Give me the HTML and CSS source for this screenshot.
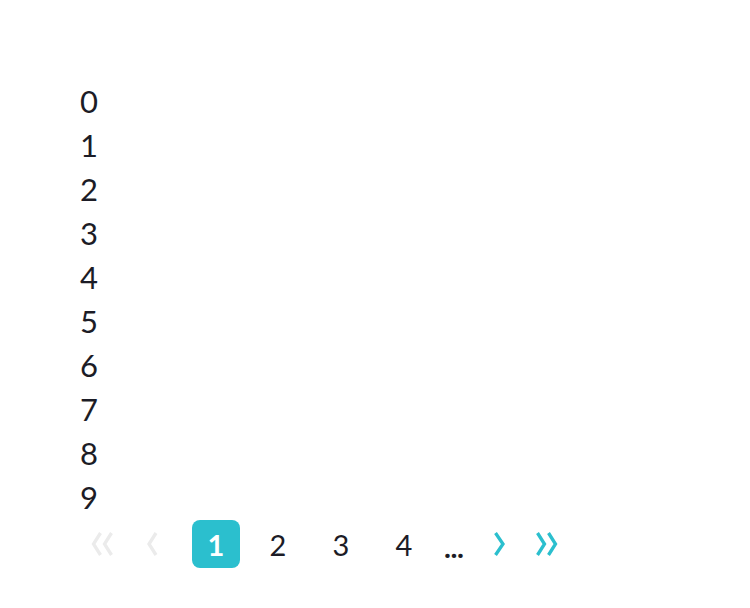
FILE: index.html
```html
<!DOCTYPE html>
<html lang="en">
<head>
<meta charset="utf-8">
<title>Pagination</title>
<link rel="stylesheet" href="styles.css">
</head>
<body>
<div class="page">
  <ul class="items">
    <li>0</li><li>1</li><li>2</li><li>3</li><li>4</li>
    <li>5</li><li>6</li><li>7</li><li>8</li><li>9</li>
  </ul>
  <nav class="pager">
    <span class="pg pg-first is-disabled">
      <svg viewBox="0 0 24 24" width="24" height="24"><polyline points="10.5,1 3.5,12 10.5,23"/><polyline points="21.5,1 14.5,12 21.5,23"/></svg>
    </span>
    <span class="pg pg-prev is-disabled">
      <svg viewBox="0 0 24 24" width="24" height="24"><polyline points="16,1 9,12 16,23"/></svg>
    </span>
    <span class="pg pg-num is-current">1</span>
    <span class="pg pg-num pg-two">2</span>
    <span class="pg pg-num">3</span>
    <span class="pg pg-num">4</span>
    <span class="pg pg-dots">...</span>
    <span class="pg pg-next">
      <svg viewBox="0 0 24 24" width="24" height="24"><polyline points="7.5,1 15,12 7.5,23"/></svg>
    </span>
    <span class="pg pg-last">
      <svg viewBox="0 0 24 24" width="24" height="24"><polyline points="2.5,1 9.5,12 2.5,23"/><polyline points="13.5,1 20.5,12 13.5,23"/></svg>
    </span>
  </nav>
</div>
</body>
</html>
```

FILE: styles.css
```css
html, body {
  margin: 0;
  padding: 0;
  background: #ffffff;
}

body {
  font-family: Lato, "Open Sans", "Liberation Sans", sans-serif;
  color: #1c1c26;
}

.page {
  padding: 79px 0 0 80px;
}

.items {
  list-style: none;
  margin: 0;
  padding: 0;
  font-size: 31px;
  line-height: 44px;
}

.pager {
  display: flex;
  align-items: center;
  height: 48px;
  margin-top: 1px;
  font-size: 29px;
}

.pg {
  display: flex;
  align-items: center;
  justify-content: center;
  height: 48px;
}

.pg svg {
  display: block;
  fill: none;
  stroke: #2bbfce;
  stroke-width: 3.3;
  stroke-linecap: butt;
  stroke-linejoin: miter;
}

.pg.is-disabled svg {
  stroke: #ebebeb;
}

.pg-first {
  width: 24px;
  margin-left: 10px;
}

.pg-prev {
  width: 24px;
  margin-left: 26px;
}

.pg-num {
  width: 48px;
  margin-left: 15px;
}

.is-current {
  margin-left: 28px;
  background: #2bbfce;
  color: #ffffff;
  font-weight: 700;
  border-radius: 8px;
}

.pg-two {
  margin-left: 14px;
}

.pg-dots {
  width: 24px;
  margin-left: 14px;
  font-weight: 900;
  font-size: 27px;
  padding-top: 6px;
  box-sizing: border-box;
}

.pg-next {
  width: 24px;
  margin-left: 22px;
}

.pg-last {
  width: 24px;
  margin-left: 23px;
}
```
